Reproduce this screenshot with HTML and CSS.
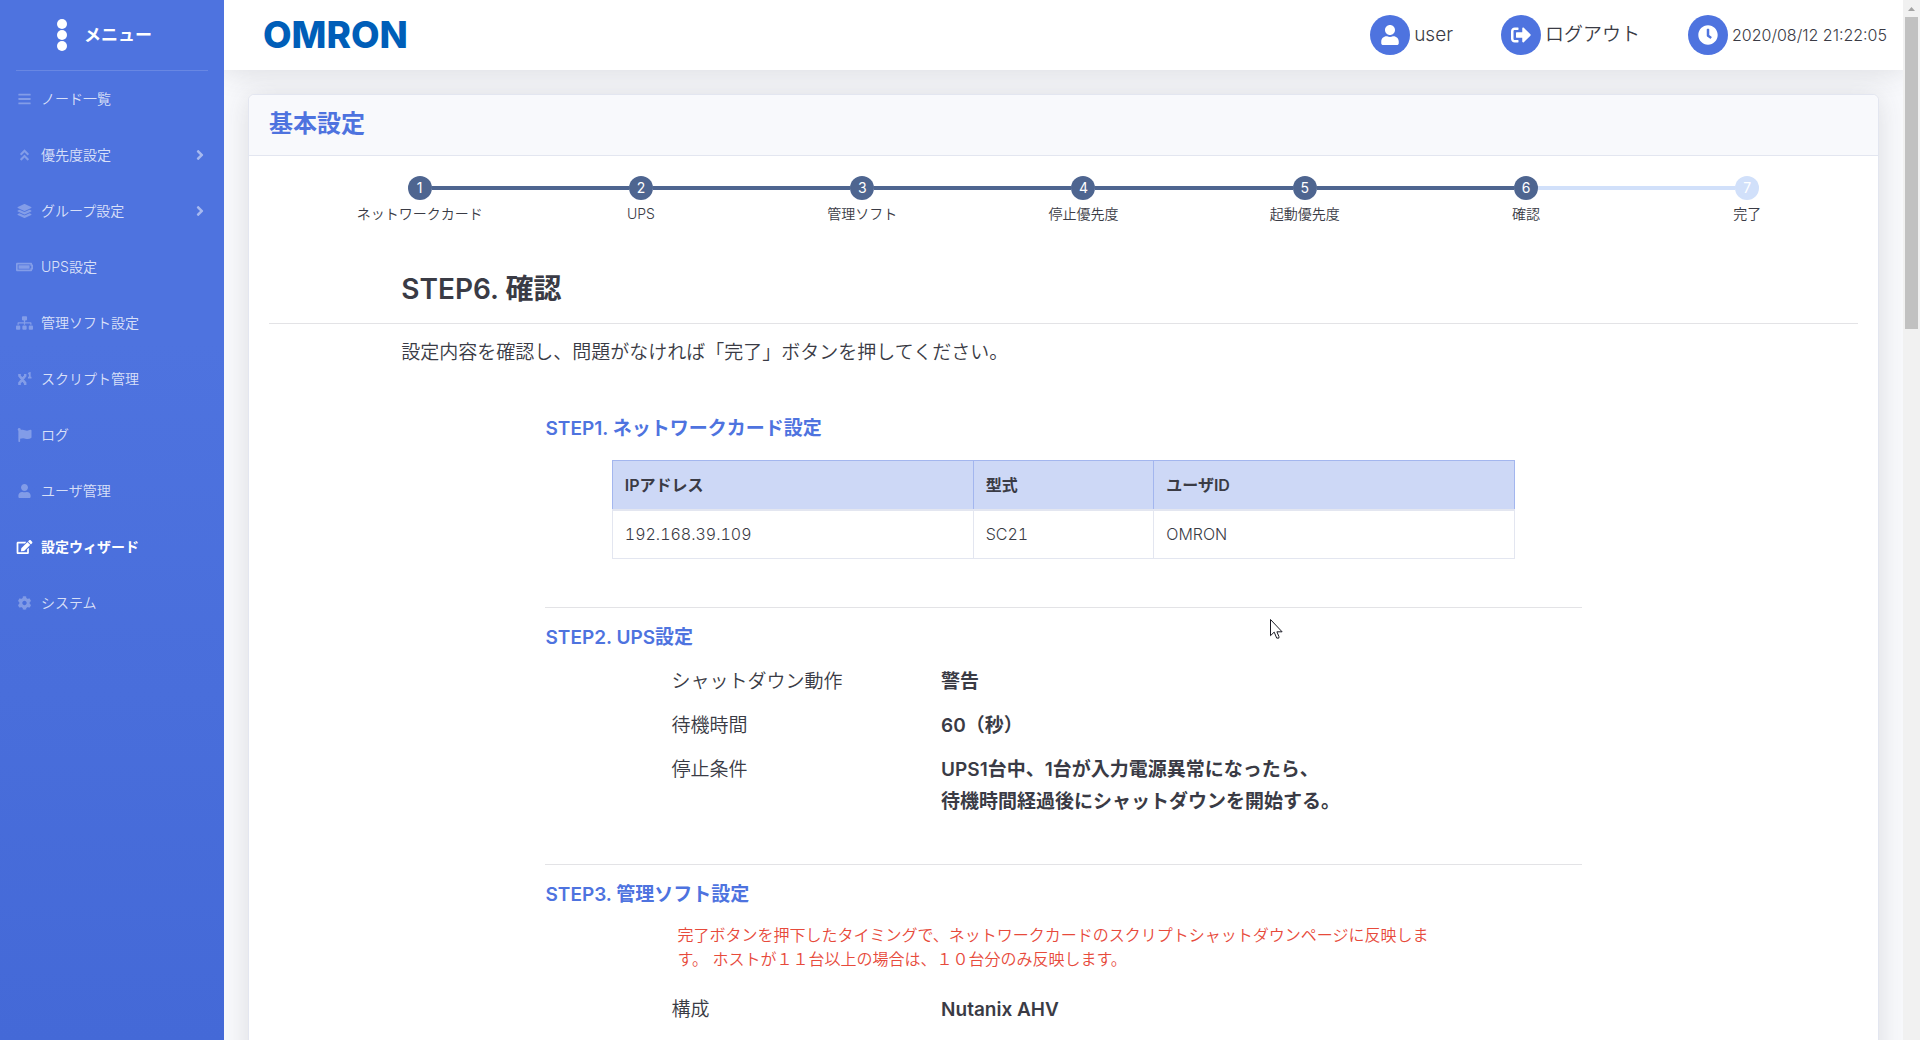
FILE: index.html
```html
<!DOCTYPE html>
<html lang="ja">
<head>
    <meta charset="UTF-8">
    <meta name="viewport" content="width=device-width, initial-scale=1.0">
    <title>基本設定</title>
    <link rel="stylesheet" href="styles.css">
</head>
<body>
    <div class="wrapper">
        <nav class="sidebar">
            <a class="brand" href="#">
                <svg class="brand-icon" viewBox="0 0 10 32"><circle cx="5" cy="5" r="5"/><circle cx="5" cy="16" r="5"/><circle cx="5" cy="27" r="5"/></svg>
                <span>メニュー</span>
            </a>
            <hr class="sidebar-divider">
            <ul class="menu">
                <li><a href="#">
                    <svg class="icon" viewBox="0 0 448 512"><rect y="60" width="448" height="72" rx="16"/><rect y="220" width="448" height="72" rx="16"/><rect y="380" width="448" height="72" rx="16"/></svg>
                    <span>ノード一覧</span>
                </a></li>
                <li><a href="#">
                    <svg class="icon" viewBox="0 0 320 512"><path d="M177 255.7l136 136c9.4 9.4 9.4 24.6 0 33.9l-22.6 22.6c-9.4 9.4-24.6 9.4-33.9 0L160 351.9l-96.4 96.4c-9.4 9.4-24.6 9.4-33.9 0L7 425.7c-9.4-9.4-9.4-24.6 0-33.9l136-136c9.4-9.5 24.6-9.5 34-.1zm-34-192L7 199.7c-9.4 9.4-9.4 24.6 0 33.9l22.6 22.6c9.4 9.4 24.6 9.4 33.9 0l96.4-96.4 96.4 96.4c9.4 9.4 24.6 9.4 33.9 0l22.6-22.6c9.4-9.4 9.4-24.6 0-33.9l-136-136c-9.2-9.4-24.4-9.4-33.8 0z"/></svg>
                    <span>優先度設定</span>
                    <svg class="arrow" viewBox="0 0 256 512"><path d="M224.3 273l-136 136c-9.4 9.4-24.6 9.4-33.9 0l-22.6-22.6c-9.4-9.4-9.4-24.6 0-33.9l96.4-96.4-96.4-96.4c-9.4-9.4-9.4-24.6 0-33.9L54.3 103c9.4-9.4 24.6-9.4 33.9 0l136 136c9.5 9.4 9.5 24.6.1 34z"/></svg>
                </a></li>
                <li><a href="#">
                    <svg class="icon" viewBox="0 0 512 512"><path d="M12.41 148.02l232.94 105.67c6.8 3.09 14.49 3.09 21.29 0l232.94-105.67c16.55-7.51 16.55-32.52 0-40.03L266.65 2.31a25.607 25.607 0 0 0-21.29 0L12.41 107.98c-16.55 7.51-16.55 32.53 0 40.04zm487.18 88.28l-58.09-26.33-161.64 73.27c-7.56 3.43-15.59 5.17-23.86 5.17s-16.29-1.74-23.86-5.17L70.51 209.97l-58.1 26.33c-16.55 7.5-16.55 32.5 0 40l232.94 105.59c6.8 3.08 14.49 3.08 21.29 0L499.59 276.3c16.55-7.5 16.55-32.5 0-40zm0 127.8l-57.87-26.23-161.86 73.37c-7.56 3.43-15.59 5.17-23.86 5.17s-16.29-1.74-23.86-5.17L70.29 337.87 12.41 364.1c-16.55 7.5-16.55 32.5 0 40l232.94 105.59c6.8 3.08 14.49 3.08 21.29 0L499.59 404.1c16.55-7.5 16.55-32.5 0-40z"/></svg>
                    <span>グループ設定</span>
                    <svg class="arrow" viewBox="0 0 256 512"><path d="M224.3 273l-136 136c-9.4 9.4-24.6 9.4-33.9 0l-22.6-22.6c-9.4-9.4-9.4-24.6 0-33.9l96.4-96.4-96.4-96.4c-9.4-9.4-9.4-24.6 0-33.9L54.3 103c9.4-9.4 24.6-9.4 33.9 0l136 136c9.5 9.4 9.5 24.6.1 34z"/></svg>
                </a></li>
                <li><a href="#">
                    <svg class="icon" viewBox="0 0 640 512"><path d="M544 160v64h32v64h-32v64H64V160h480m16-64H48c-26.51 0-48 21.49-48 48v224c0 26.51 21.49 48 48 48h512c26.51 0 48-21.49 48-48v-16h8c13.255 0 24-10.745 24-24V184c0-13.255-10.745-24-24-24h-8v-16c0-26.51-21.49-48-48-48zm-48 96H96v128h416V192z"/></svg>
                    <span>UPS設定</span>
                </a></li>
                <li><a href="#">
                    <svg class="icon" viewBox="0 0 640 512"><path d="M128 352H32c-17.67 0-32 14.33-32 32v96c0 17.67 14.33 32 32 32h96c17.67 0 32-14.33 32-32v-96c0-17.67-14.33-32-32-32zm-24-80h192v48h48v-48h192v48h48v-57.59c0-21.17-17.23-38.41-38.41-38.41H344v-64h40c17.67 0 32-14.33 32-32V32c0-17.67-14.33-32-32-32H256c-17.67 0-32 14.33-32 32v96c0 17.67 14.33 32 32 32h40v64H94.41C73.23 224 56 241.23 56 262.41V320h48v-48zm264 80h-96c-17.67 0-32 14.33-32 32v96c0 17.67 14.33 32 32 32h96c17.67 0 32-14.33 32-32v-96c0-17.67-14.33-32-32-32zm240 0h-96c-17.67 0-32 14.33-32 32v96c0 17.67 14.33 32 32 32h96c17.67 0 32-14.33 32-32v-96c0-17.67-14.33-32-32-32z"/></svg>
                    <span>管理ソフト設定</span>
                </a></li>
                <li><a href="#">
                    <svg class="icon icon-line" viewBox="0 0 16 16"><path class="thick" d="M2 4l7 9M9 4l-7 9M0.8 3.7h3M0.8 13.3h3M7.4 3.7h2.8M7.4 13.3h2.8"/><path class="thin" d="M12.2 2l1.8-.8v5M12 6.4h4"/></svg>
                    <span>スクリプト管理</span>
                </a></li>
                <li><a href="#">
                    <svg class="icon" viewBox="0 0 512 512"><path d="M349.565 98.783C295.978 98.783 251.721 64 184.348 64c-24.955 0-47.309 4.384-68.045 12.013a55.947 55.947 0 0 0 3.586-23.562C118.117 24.015 94.806 1.206 66.338.048 34.345-1.254 8 24.296 8 56c0 19.026 9.497 35.825 24 45.945V488c0 13.255 10.745 24 24 24h16c13.255 0 24-10.745 24-24v-94.4c28.311-12.064 63.582-22.122 114.435-22.122 53.588 0 97.844 34.783 165.217 34.783 48.169 0 86.667-16.294 122.505-40.858C506.84 359.452 512 349.571 512 339.045v-243.1c0-23.393-24.269-38.87-45.485-29.016-34.338 15.948-76.454 31.854-116.95 31.854z"/></svg>
                    <span>ログ</span>
                </a></li>
                <li><a href="#">
                    <svg class="icon" viewBox="0 0 448 512"><path d="M224 256c70.7 0 128-57.3 128-128S294.7 0 224 0 96 57.3 96 128s57.3 128 128 128zm89.6 32h-16.7c-22.2 10.2-46.9 16-72.9 16s-50.6-5.8-72.9-16h-16.7C60.2 288 0 348.2 0 422.4V464c0 26.5 21.5 48 48 48h352c26.5 0 48-21.5 48-48v-41.6c0-74.2-60.2-134.4-134.4-134.4z"/></svg>
                    <span>ユーザ管理</span>
                </a></li>
                <li class="active"><a href="#">
                    <svg class="icon" viewBox="0 0 576 512"><path d="M402.6 83.2l90.2 90.2c3.8 3.8 3.8 10 0 13.8L274.4 405.6l-92.8 10.3c-12.4 1.4-22.9-9.1-21.5-21.5l10.3-92.8L388.8 83.2c3.8-3.8 10-3.8 13.8 0zm162-22.9l-48.8-48.8c-15.2-15.2-39.9-15.2-55.2 0l-35.4 35.4c-3.8 3.8-3.8 10 0 13.8l90.2 90.2c3.8 3.8 10 3.8 13.8 0l35.4-35.4c15.2-15.3 15.2-40 0-55.2zM384 346.2V448H64V128h229.8c3.2 0 6.2-1.3 8.5-3.5l40-40c7.6-7.6 2.2-20.5-8.5-20.5H48C21.5 64 0 85.5 0 112v352c0 26.5 21.5 48 48 48h352c26.5 0 48-21.5 48-48V306.2c0-10.7-12.9-16-20.5-8.5l-40 40c-2.2 2.3-3.5 5.3-3.5 8.5z"/></svg>
                    <span>設定ウィザード</span>
                </a></li>
                <li><a href="#">
                    <svg class="icon" viewBox="0 0 512 512"><path d="M487.4 315.7l-42.6-24.6c4.3-23.2 4.3-47 0-70.2l42.6-24.6c4.9-2.8 7.1-8.6 5.5-14-11.1-35.6-30-67.8-54.7-94.6-3.8-4.1-10-5.1-14.8-2.3L380.8 110c-17.9-15.4-38.5-27.3-60.8-35.1V25.8c0-5.6-3.9-10.5-9.4-11.7-36.7-8.2-74.3-7.8-109.2 0-5.5 1.2-9.4 6.1-9.4 11.7V75c-22.2 7.9-42.8 19.8-60.8 35.1L88.7 85.5c-4.9-2.8-11-1.9-14.8 2.3-24.7 26.7-43.6 58.9-54.7 94.6-1.7 5.4.6 11.2 5.5 14L67.3 221c-4.3 23.2-4.3 47 0 70.2l-42.6 24.6c-4.9 2.8-7.1 8.6-5.5 14 11.1 35.6 30 67.8 54.7 94.6 3.8 4.1 10 5.1 14.8 2.3l42.6-24.6c17.9 15.4 38.5 27.3 60.8 35.1v49.2c0 5.6 3.9 10.5 9.4 11.7 36.7 8.2 74.3 7.8 109.2 0 5.5-1.2 9.4-6.1 9.4-11.7v-49.2c22.2-7.9 42.8-19.8 60.8-35.1l42.6 24.6c4.9 2.8 11 1.9 14.8-2.3 24.7-26.7 43.6-58.9 54.7-94.6 1.5-5.5-.7-11.3-5.6-14.1zM256 336c-44.1 0-80-35.9-80-80s35.9-80 80-80 80 35.9 80 80-35.9 80-80 80z"/></svg>
                    <span>システム</span>
                </a></li>
            </ul>
        </nav>

        <div class="content">
            <header class="topbar">
                <a class="logo" href="#">OMRON</a>
                <div class="topbar-nav">
                    <a class="topbar-item" href="#">
                        <span class="circle"><svg viewBox="0 0 448 512"><path d="M224 256c70.7 0 128-57.3 128-128S294.7 0 224 0 96 57.3 96 128s57.3 128 128 128zm89.6 32h-16.7c-22.2 10.2-46.9 16-72.9 16s-50.6-5.8-72.9-16h-16.7C60.2 288 0 348.2 0 422.4V464c0 26.5 21.5 48 48 48h352c26.5 0 48-21.5 48-48v-41.6c0-74.2-60.2-134.4-134.4-134.4z"/></svg></span>
                        <span>user</span>
                    </a>
                    <a class="topbar-item" href="#">
                        <span class="circle"><svg viewBox="0 0 512 512"><path d="M497 273L329 441c-15 15-41 4.5-41-17v-96H152c-13.3 0-24-10.7-24-24v-96c0-13.3 10.7-24 24-24h136V88c0-21.4 25.9-32 41-17l168 168c9.3 9.4 9.3 24.6 0 34zM192 436v-40c0-6.6-5.4-12-12-12H96c-17.7 0-32-14.3-32-32V160c0-17.7 14.3-32 32-32h84c6.6 0 12-5.4 12-12V76c0-6.6-5.4-12-12-12H96c-53 0-96 43-96 96v192c0 53 43 96 96 96h84c6.6 0 12-5.4 12-12z"/></svg></span>
                        <span>ログアウト</span>
                    </a>
                    <div class="topbar-item">
                        <span class="circle"><svg viewBox="0 0 512 512"><path d="M256,8C119,8,8,119,8,256S119,504,256,504,504,393,504,256,393,8,256,8Zm92.49,313h0l-20,25a16,16,0,0,1-22.49,2.5h0l-67-49.72a40,40,0,0,1-15-31.23V112a16,16,0,0,1,16-16h32a16,16,0,0,1,16,16V256l58,42.5A16,16,0,0,1,348.49,321Z"/></svg></span>
                        <time class="clock">2020/08/12 21:22:05</time>
                    </div>
                </div>
            </header>

            <main class="card">
                <h1 class="card-header">基本設定</h1>
                <div class="card-body">
                    <ol class="steps">
                        <li><span class="num">1</span>ネットワークカード</li>
                        <li><span class="num">2</span>UPS</li>
                        <li><span class="num">3</span>管理ソフト</li>
                        <li><span class="num">4</span>停止優先度</li>
                        <li><span class="num">5</span>起動優先度</li>
                        <li><span class="num">6</span>確認</li>
                        <li class="todo"><span class="num">7</span>完了</li>
                    </ol>

                    <h2 class="step-title">STEP6. 確認</h2>
                    <p class="lead">設定内容を確認し、問題がなければ「完了」ボタンを押してください。</p>

                    <section class="section">
                        <h3>STEP1. ネットワークカード設定</h3>
                        <table class="card-table">
                            <thead>
                                <tr><th class="wide">IPアドレス</th><th>型式</th><th class="wide">ユーザID</th></tr>
                            </thead>
                            <tbody>
                                <tr><td>192.168.39.109</td><td>SC21</td><td>OMRON</td></tr>
                            </tbody>
                        </table>
                    </section>

                    <section class="section">
                        <h3>STEP2. UPS設定</h3>
                        <dl class="settings">
                            <dt>シャットダウン動作</dt>
                            <dd>警告</dd>
                            <dt>待機時間</dt>
                            <dd>60（秒）</dd>
                            <dt>停止条件</dt>
                            <dd>UPS1台中、1台が入力電源異常になったら、<br>待機時間経過後にシャットダウンを開始する。</dd>
                        </dl>
                    </section>

                    <section class="section">
                        <h3>STEP3. 管理ソフト設定</h3>
                        <p class="warning">完了ボタンを押下したタイミングで、ネットワークカードのスクリプトシャットダウンページに反映します。 ホストが１１台以上の場合は、１０台分のみ反映します。</p>
                        <dl class="settings">
                            <dt>構成</dt>
                            <dd>Nutanix AHV</dd>
                        </dl>
                    </section>
                </div>
            </main>
        </div>

        <div class="scrollbar" aria-hidden="true">
            <svg class="scroll-up" viewBox="0 0 17 17"><path d="M5 11h7L8.5 7z"/></svg>
            <div class="thumb"></div>
        </div>
    </div>

    <svg class="pointer" viewBox="0 0 13 20" aria-hidden="true"><path d="M.5.5v16.2l3.7-3.6 2.5 6h2.2v-1.6l-2-4.7h5.2z"/></svg>
</body>
</html>
```
FILE: styles.css
```css
* {
    box-sizing: border-box;
}

body {
    margin: 0;
    font-family: Inter, "Noto Sans CJK JP", sans-serif;
    font-size: 16px;
    font-weight: 350;
    line-height: 24px;
    color: #3a3b45;
    background: #f8f9fc;
}

a {
    color: inherit;
    text-decoration: none;
}

h1, h2, h3, p, ul, ol, dl, dd {
    margin: 0;
    padding: 0;
}

h1, h2, h3, th {
    font-weight: 600;
}

ul, ol {
    list-style: none;
}

.wrapper {
    display: flex;
    height: 100vh;
    overflow: hidden;
}

/* Sidebar */
.sidebar {
    flex: 0 0 224px;
    background: linear-gradient(180deg, #4e73df 33%, #4469d7 100%);
    color: #fff;
}

.brand {
    display: flex;
    align-items: center;
    justify-content: center;
    gap: 17px;
    height: 70px;
    padding-right: 15px;
    font-size: 17px;
    font-weight: bold;
}

.brand-icon {
    width: 10px;
    height: 32px;
    fill: #fff;
}

.sidebar-divider {
    margin: 0 16px;
    border: 0;
    border-top: 1px solid rgba(255, 255, 255, 0.15);
}

.menu a {
    display: flex;
    align-items: center;
    gap: 8px;
    height: 56px;
    padding: 0 16px;
    font-size: 14px;
    color: rgba(255, 255, 255, 0.8);
}

.menu .active a {
    font-weight: bold;
    color: #fff;
}

.icon {
    width: 17px;
    height: 14px;
    fill: rgba(255, 255, 255, 0.3);
}

.icon-line {
    fill: none;
    stroke: rgba(255, 255, 255, 0.3);
}

.icon-line .thick {
    stroke-width: 3;
}

.icon-line .thin {
    stroke-width: 2;
}

.active .icon {
    fill: #fff;
}

.arrow {
    width: 16px;
    height: 16px;
    margin-left: auto;
    fill: rgba(255, 255, 255, 0.5);
}

/* Topbar */
.content {
    flex: 1;
    min-width: 0;
    overflow: hidden;
}

.topbar {
    display: flex;
    align-items: center;
    justify-content: space-between;
    height: 70px;
    padding: 0 16px 0 39px;
    background: #fff;
    box-shadow: 0 2px 28px rgba(58, 59, 69, 0.15);
}

.logo {
    font-family: Inter, sans-serif;
    font-size: 37px;
    line-height: 40px;
    font-weight: 800;
    color: #005eb8;
}

.topbar-nav {
    display: flex;
    gap: 48px;
}

.topbar-item {
    display: flex;
    align-items: center;
    gap: 4px;
    font-size: 19px;
}

.clock {
    font-size: 16px;
}

.circle {
    display: flex;
    align-items: center;
    justify-content: center;
    width: 40px;
    height: 40px;
    border-radius: 50%;
    background: #4e73df;
}

.circle svg {
    width: 20px;
    height: 20px;
    fill: #fff;
}

/* Card */
.card {
    margin: 24px;
    background: #fff;
    border: 1px solid #e3e6f0;
    border-radius: 6px;
    box-shadow: 0 2px 28px rgba(58, 59, 69, 0.15);
}

.card-header {
    padding: 14px 20px 16px;
    font-size: 24px;
    line-height: 30px;
    color: #4e73df;
    background: #f8f9fc;
    border-bottom: 1px solid #e3e6f0;
    border-radius: 6px 6px 0 0;
}

.card-body {
    padding: 20px;
}

.steps {
    display: flex;
    padding-left: 40px;
}

.steps li {
    position: relative;
    flex: 1;
    font-size: 14px;
    line-height: 28px;
    text-align: center;
}

.num {
    display: block;
    width: 24px;
    margin: 0 auto;
    font-weight: 400;
    line-height: 24px;
    border-radius: 50%;
    color: #fff;
    background: #4e6590;
}

/* line joining a step to the one before it */
.steps li + li::before {
    content: "";
    position: absolute;
    top: 10px;
    right: calc(50% + 12px);
    width: calc(100% - 24px);
    height: 4px;
    background: #4e6590;
}

.steps .todo .num,
.steps .todo::before {
    background: #d1e0fa !important;
}

.step-title {
    padding: 42px 8.33% 14px;
    font-size: 28px;
    line-height: 39px;
    border-bottom: 1px solid #e3e3e6;
}

.lead {
    padding: 13px 8.33% 44px;
    font-size: 19px;
    line-height: 32px;
}

.section {
    margin: 0 17.4% 40px;
}

.section + .section {
    padding-top: 14px;
    border-top: 1px solid #e3e3e6;
}

.section h3 {
    margin-bottom: 6px;
    font-size: 19px;
    line-height: 32px;
    color: #4e73df;
}

.card-table {
    width: 87.2%;
    margin: 15px auto 48px;
    border-collapse: collapse;
    table-layout: fixed;
}

.card-table th,
.card-table td {
    height: 49px;
    padding: 0 12px;
    font-variant-numeric: tabular-nums;
    text-align: left;
    border: 1px solid #e3e6f0;
}

.card-table th {
    background: #cdd8f6;
    border-color: #a3b6ee;
    border-bottom: 2px solid #e3e6f0;
}

.wide {
    width: 40%;
}

.settings {
    display: grid;
    grid-template-columns: 26% 1fr;
    padding-left: 126px;
    font-size: 19px;
    line-height: 32px;
}

.settings dt,
.settings dd {
    padding: 6px 0;
}

.settings dd {
    padding-left: 33px;
    font-weight: 600;
}

.warning {
    padding: 6px 144px 17px 132px;
    color: #e74a3b;
}

/* Scrollbar */
.scrollbar {
    flex: 0 0 17px;
    background: #f1f1f1;
}

.scroll-up {
    display: block;
    width: 17px;
    height: 17px;
    fill: #a3a3a3;
}

.thumb {
    height: 30%;
    margin: 0 2px;
    background: #c1c1c1;
}

.pointer {
    position: fixed;
    left: 1270px;
    top: 619px;
    width: 13px;
    height: 20px;
    fill: #fff;
    stroke: #1a1a24;
}
```
